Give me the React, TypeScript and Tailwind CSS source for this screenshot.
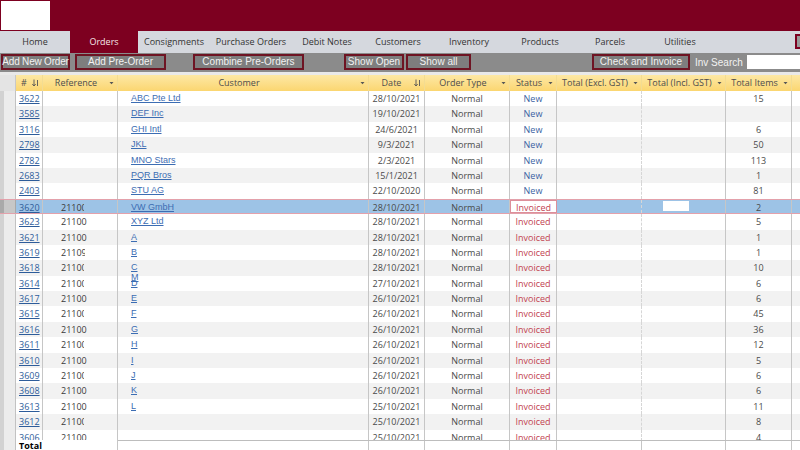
import React from 'react';

type Row = {
    id: string;
    ref: string;
    refW?: number;
    cust: string;
    date: string;
    status: 'New' | 'Invoiced';
    items: string;
    selected?: boolean;
    overlay?: string;
};

const tabs = [
    { label: 'Home', w: 'w-[70px]' },
    { label: 'Orders', w: 'w-[68px]', active: true },
    { label: 'Consignments', w: 'w-[72px]' },
    { label: 'Purchase Orders', w: 'w-[82px]' },
    { label: 'Debit Notes', w: 'w-[70px]' },
    { label: 'Customers', w: 'w-[72px]' },
    { label: 'Inventory', w: 'w-[70px]' },
    { label: 'Products', w: 'w-[72px]' },
    { label: 'Parcels', w: 'w-[68px]' },
    { label: 'Utilities', w: 'w-[72px]' },
];

const rows: Row[] = [
    { id: '3622', ref: '', cust: 'ABC Pte Ltd', date: '28/10/2021', status: 'New', items: '15' },
    { id: '3585', ref: '', cust: 'DEF Inc', date: '19/10/2021', status: 'New', items: '' },
    { id: '3116', ref: '', cust: 'GHI Intl', date: '24/6/2021', status: 'New', items: '6' },
    { id: '2798', ref: '', cust: 'JKL', date: '9/3/2021', status: 'New', items: '50' },
    { id: '2782', ref: '', cust: 'MNO Stars', date: '2/3/2021', status: 'New', items: '113' },
    { id: '2683', ref: '', cust: 'PQR Bros', date: '15/1/2021', status: 'New', items: '1' },
    { id: '2403', ref: '', cust: 'STU AG', date: '22/10/2020', status: 'New', items: '81' },
    { id: '3620', ref: '2110012', refW: 23, cust: 'VW GmbH', date: '28/10/2021', status: 'Invoiced', items: '2', selected: true },
    { id: '3623', ref: '21100', cust: 'XYZ Ltd', date: '28/10/2021', status: 'Invoiced', items: '5' },
    { id: '3621', ref: '21100', cust: 'A', date: '28/10/2021', status: 'Invoiced', items: '1' },
    { id: '3619', ref: '2110988', refW: 24, cust: 'B', date: '28/10/2021', status: 'Invoiced', items: '1' },
    { id: '3618', ref: '2110012', refW: 23, cust: 'C', date: '28/10/2021', status: 'Invoiced', items: '10' },
    { id: '3614', ref: '2110012', refW: 23, cust: 'D', overlay: 'M', date: '27/10/2021', status: 'Invoiced', items: '6' },
    { id: '3617', ref: '21100', cust: 'E', date: '26/10/2021', status: 'Invoiced', items: '6' },
    { id: '3615', ref: '2110012', refW: 23, cust: 'F', date: '26/10/2021', status: 'Invoiced', items: '45' },
    { id: '3616', ref: '21100', cust: 'G', date: '26/10/2021', status: 'Invoiced', items: '36' },
    { id: '3611', ref: '2110012', refW: 23, cust: 'H', date: '26/10/2021', status: 'Invoiced', items: '12' },
    { id: '3610', ref: '21100', cust: 'I', date: '26/10/2021', status: 'Invoiced', items: '5' },
    { id: '3609', ref: '2110012', refW: 23, cust: 'J', date: '26/10/2021', status: 'Invoiced', items: '6' },
    { id: '3608', ref: '21100', cust: 'K', date: '26/10/2021', status: 'Invoiced', items: '6' },
    { id: '3613', ref: '21100', cust: 'L', date: '25/10/2021', status: 'Invoiced', items: '11' },
    { id: '3612', ref: '2110012', refW: 23, cust: '', date: '25/10/2021', status: 'Invoiced', items: '8' },
    { id: '3606', ref: '21100', cust: '', date: '25/10/2021', status: 'Invoiced', items: '4' },
];

const DropArrow = () => (
    <svg width="5" height="4" viewBox="0 0 5 4" className="shrink-0">
        <path d="M0.5 1 L4.5 1 L2.5 3.2 Z" fill="#555" />
    </svg>
);

const SortArrow = () => (
    <svg width="7" height="8" viewBox="0 0 7 8" className="shrink-0">
        <path d="M2 0.5 V7 M0.3 5 L2 7 L3.7 5" stroke="#555" strokeWidth="0.9" fill="none" />
        <path d="M5.5 1 V7" stroke="#555" strokeWidth="0.9" />
    </svg>
);

const ToolButton = ({ label, className }: { label: string; className: string }) => (
    <div
        className={`h-[16px] border-2 border-[#6e1423] bg-[#7e7e7e] text-[#f2f2f2] text-[10px] leading-[12px] whitespace-nowrap font-['Liberation_Sans',Arial,sans-serif] flex items-center justify-center ${className}`}
    >
        {label}
    </div>
);

const HeadCell = ({ label, w, sort, border = true }: { label: string; w: string; sort?: boolean; border?: boolean }) => (
    <div className={`${w} shrink-0 h-full flex items-center pr-[3px] ${border ? 'border-r border-[#f3dc92]' : ''}`}>
        <span className="flex-1 text-center truncate">{label}</span>
        {sort ? <SortArrow /> : <DropArrow />}
    </div>
);

export default function App() {
    return (
        <div className="w-[800px] h-[450px] overflow-hidden bg-white font-['Open_Sans',sans-serif] select-none">
            {/* title bar */}
            <div className="h-[31px] bg-[#7d0020] pt-[1px] pl-[1px]">
                <div className="w-[49px] h-[29px] bg-white" />
            </div>

            {/* nav tabs */}
            <div className="h-[22px] bg-[#d5d8de] flex items-stretch text-[9px] text-[#333]">
                {tabs.map((t) => (
                    <div
                        key={t.label}
                        className={`${t.w} flex items-center justify-center ${t.active ? 'bg-[#7d0020] text-[#f4e4e6]' : ''}`}
                    >
                        {t.label}
                    </div>
                ))}
                <div className="flex-1" />
                <div className="w-[5px] h-[15px] mt-[3px] border-2 border-r-0 border-[#7d0020] bg-[#9a9a9a]" />
            </div>

            {/* toolbar */}
            <div className="h-[19px] bg-[#8b8b8b] flex items-center pb-[1px]">
                <ToolButton label="Add New Order" className="ml-[1px] w-[69px] tracking-[-0.2px]" />
                <ToolButton label="Add Pre-Order" className="ml-[5px] w-[91px]" />
                <ToolButton label="Combine Pre-Orders" className="ml-[27px] w-[111px]" />
                <ToolButton label="Show Open" className="ml-[40px] w-[60px]" />
                <ToolButton label="Show all" className="ml-[2px] w-[65px]" />
                <ToolButton label="Check and Invoice" className="ml-[121px] w-[98px]" />
                <span className="ml-[5px] w-[52px] text-[10px] text-[#f2f2f2] whitespace-nowrap font-['Liberation_Sans',Arial,sans-serif]">
                    Inv Search
                </span>
                <div className="flex-1 h-[14px] bg-white" />
            </div>

            {/* datasheet */}
            <div className="h-[3px] bg-[#e9e9e9]" />
            <div className="h-[16px] flex text-[9px] text-[#4d4d4d]">
                <div className="w-[16px] shrink-0 bg-[#e4e4e4] border-r border-[#c8c8c8]" />
                <div className="flex flex-1 bg-gradient-to-b from-[#fde8a4] to-[#fbd670]">
                    <HeadCell label="#" w="w-[27px]" sort />
                    <HeadCell label="Reference" w="w-[75px]" />
                    <HeadCell label="Customer" w="w-[251px]" />
                    <HeadCell label="Date" w="w-[56px]" sort />
                    <HeadCell label="Order Type" w="w-[85px]" />
                    <HeadCell label="Status" w="w-[47px]" />
                    <HeadCell label="Total (Excl. GST)" w="w-[85px]" />
                    <HeadCell label="Total (Incl. GST)" w="w-[84px]" />
                    <HeadCell label="Total Items" w="w-[66px]" />
                    <div className="flex-1" />
                </div>
            </div>

            <div className="h-[349px] overflow-hidden">
                {rows.map((r, i) => {
                    const bg = r.selected ? 'bg-[#9dc3e6]' : i % 2 === 0 ? 'bg-white' : 'bg-[#f2f2f2]';
                    return (
                        <div
                            key={r.id}
                            className={`h-[15.4px] flex text-[9px] leading-[15px] ${r.selected ? 'border-y border-[#e3a1ab]' : ''}`}
                        >
                            <div
                                className={`w-[16px] shrink-0 border-l-[4px] border-r ${r.selected ? 'bg-[#c7c7c7] border-l-[#a9a9a9] border-r-[#a8a8a8]' : 'bg-[#ececec] border-l-[#d2d2d2] border-r-[#c2c2c2]'}`}
                            />
                            <div className={`flex flex-1 ${bg}`}>
                                <div className="w-[27px] shrink-0 border-r border-[#c6c6c6] pl-[3px]">
                                    <span className="text-[#2d5c9a] underline underline-offset-1">{r.id}</span>
                                </div>
                                <div className="w-[75px] shrink-0 border-r border-[#c6c6c6] pl-[18px] text-[#3a3a3a]">
                                    {r.ref && (
                                        <span
                                            className="block overflow-hidden whitespace-nowrap"
                                            style={{ width: r.refW ?? 27 }}
                                        >
                                            {r.ref}
                                        </span>
                                    )}
                                </div>
                                <div className="w-[251px] shrink-0 border-r border-[#c6c6c6] pl-[13px] font-['Liberation_Sans',Arial,sans-serif] text-[#3c6db3] relative">
                                    {r.cust && <span className="underline underline-offset-1">{r.cust}</span>}
                                    {r.overlay && (
                                        <span className="absolute left-[13px] top-[-6px] underline underline-offset-1">
                                            {r.overlay}
                                        </span>
                                    )}
                                </div>
                                <div className="w-[56px] shrink-0 border-r border-[#c6c6c6] text-center text-[#4a4a4a]">
                                    {r.date}
                                </div>
                                <div className="w-[85px] shrink-0 border-r border-[#c6c6c6] text-center text-[#4a4a4a]">
                                    Normal
                                </div>
                                <div
                                    className={`w-[47px] shrink-0 text-center ${r.status === 'New' ? 'text-[#3a5fa2]' : 'text-[#c2434f]'} ${r.selected ? 'bg-white border border-[#dd8f9a] leading-[13px]' : 'border-r border-[#c6c6c6]'}`}
                                >
                                    {r.status}
                                </div>
                                <div className="w-[85px] shrink-0 border-r border-dashed border-[#d6d6d6]" />
                                <div className="w-[84px] shrink-0 border-r border-[#c6c6c6] flex items-center">
                                    {r.selected && <div className="ml-[21px] w-[26px] h-[10px] bg-white" />}
                                </div>
                                <div className="w-[66px] shrink-0 border-r border-[#c6c6c6] text-center text-[#4a4a4a]">
                                    {r.items}
                                </div>
                                <div className="flex-1" />
                            </div>
                        </div>
                    );
                })}
            </div>

            {/* totals */}
            <div className="h-[10px] flex text-[9px] leading-[11px]">
                <div className="w-[16px] shrink-0 bg-[#ececec] border-l-[4px] border-l-[#d2d2d2] border-r border-r-[#c2c2c2]" />
                <div className="w-[102px] shrink-0 border-r border-[#c6c6c6] pl-[3px] font-bold text-black">Total</div>
                <div className="flex flex-1 border-t border-[#bdbdbd]">
                    <div className="w-[251px] shrink-0 border-r border-[#c6c6c6]" />
                    <div className="w-[56px] shrink-0 border-r border-[#c6c6c6]" />
                    <div className="w-[85px] shrink-0 border-r border-[#c6c6c6]" />
                    <div className="w-[47px] shrink-0 border-r border-[#c6c6c6]" />
                    <div className="w-[85px] shrink-0 border-r border-[#c6c6c6]" />
                    <div className="w-[84px] shrink-0 border-r border-[#c6c6c6]" />
                    <div className="w-[66px] shrink-0 border-r border-[#c6c6c6]" />
                </div>
            </div>
        </div>
    );
}
